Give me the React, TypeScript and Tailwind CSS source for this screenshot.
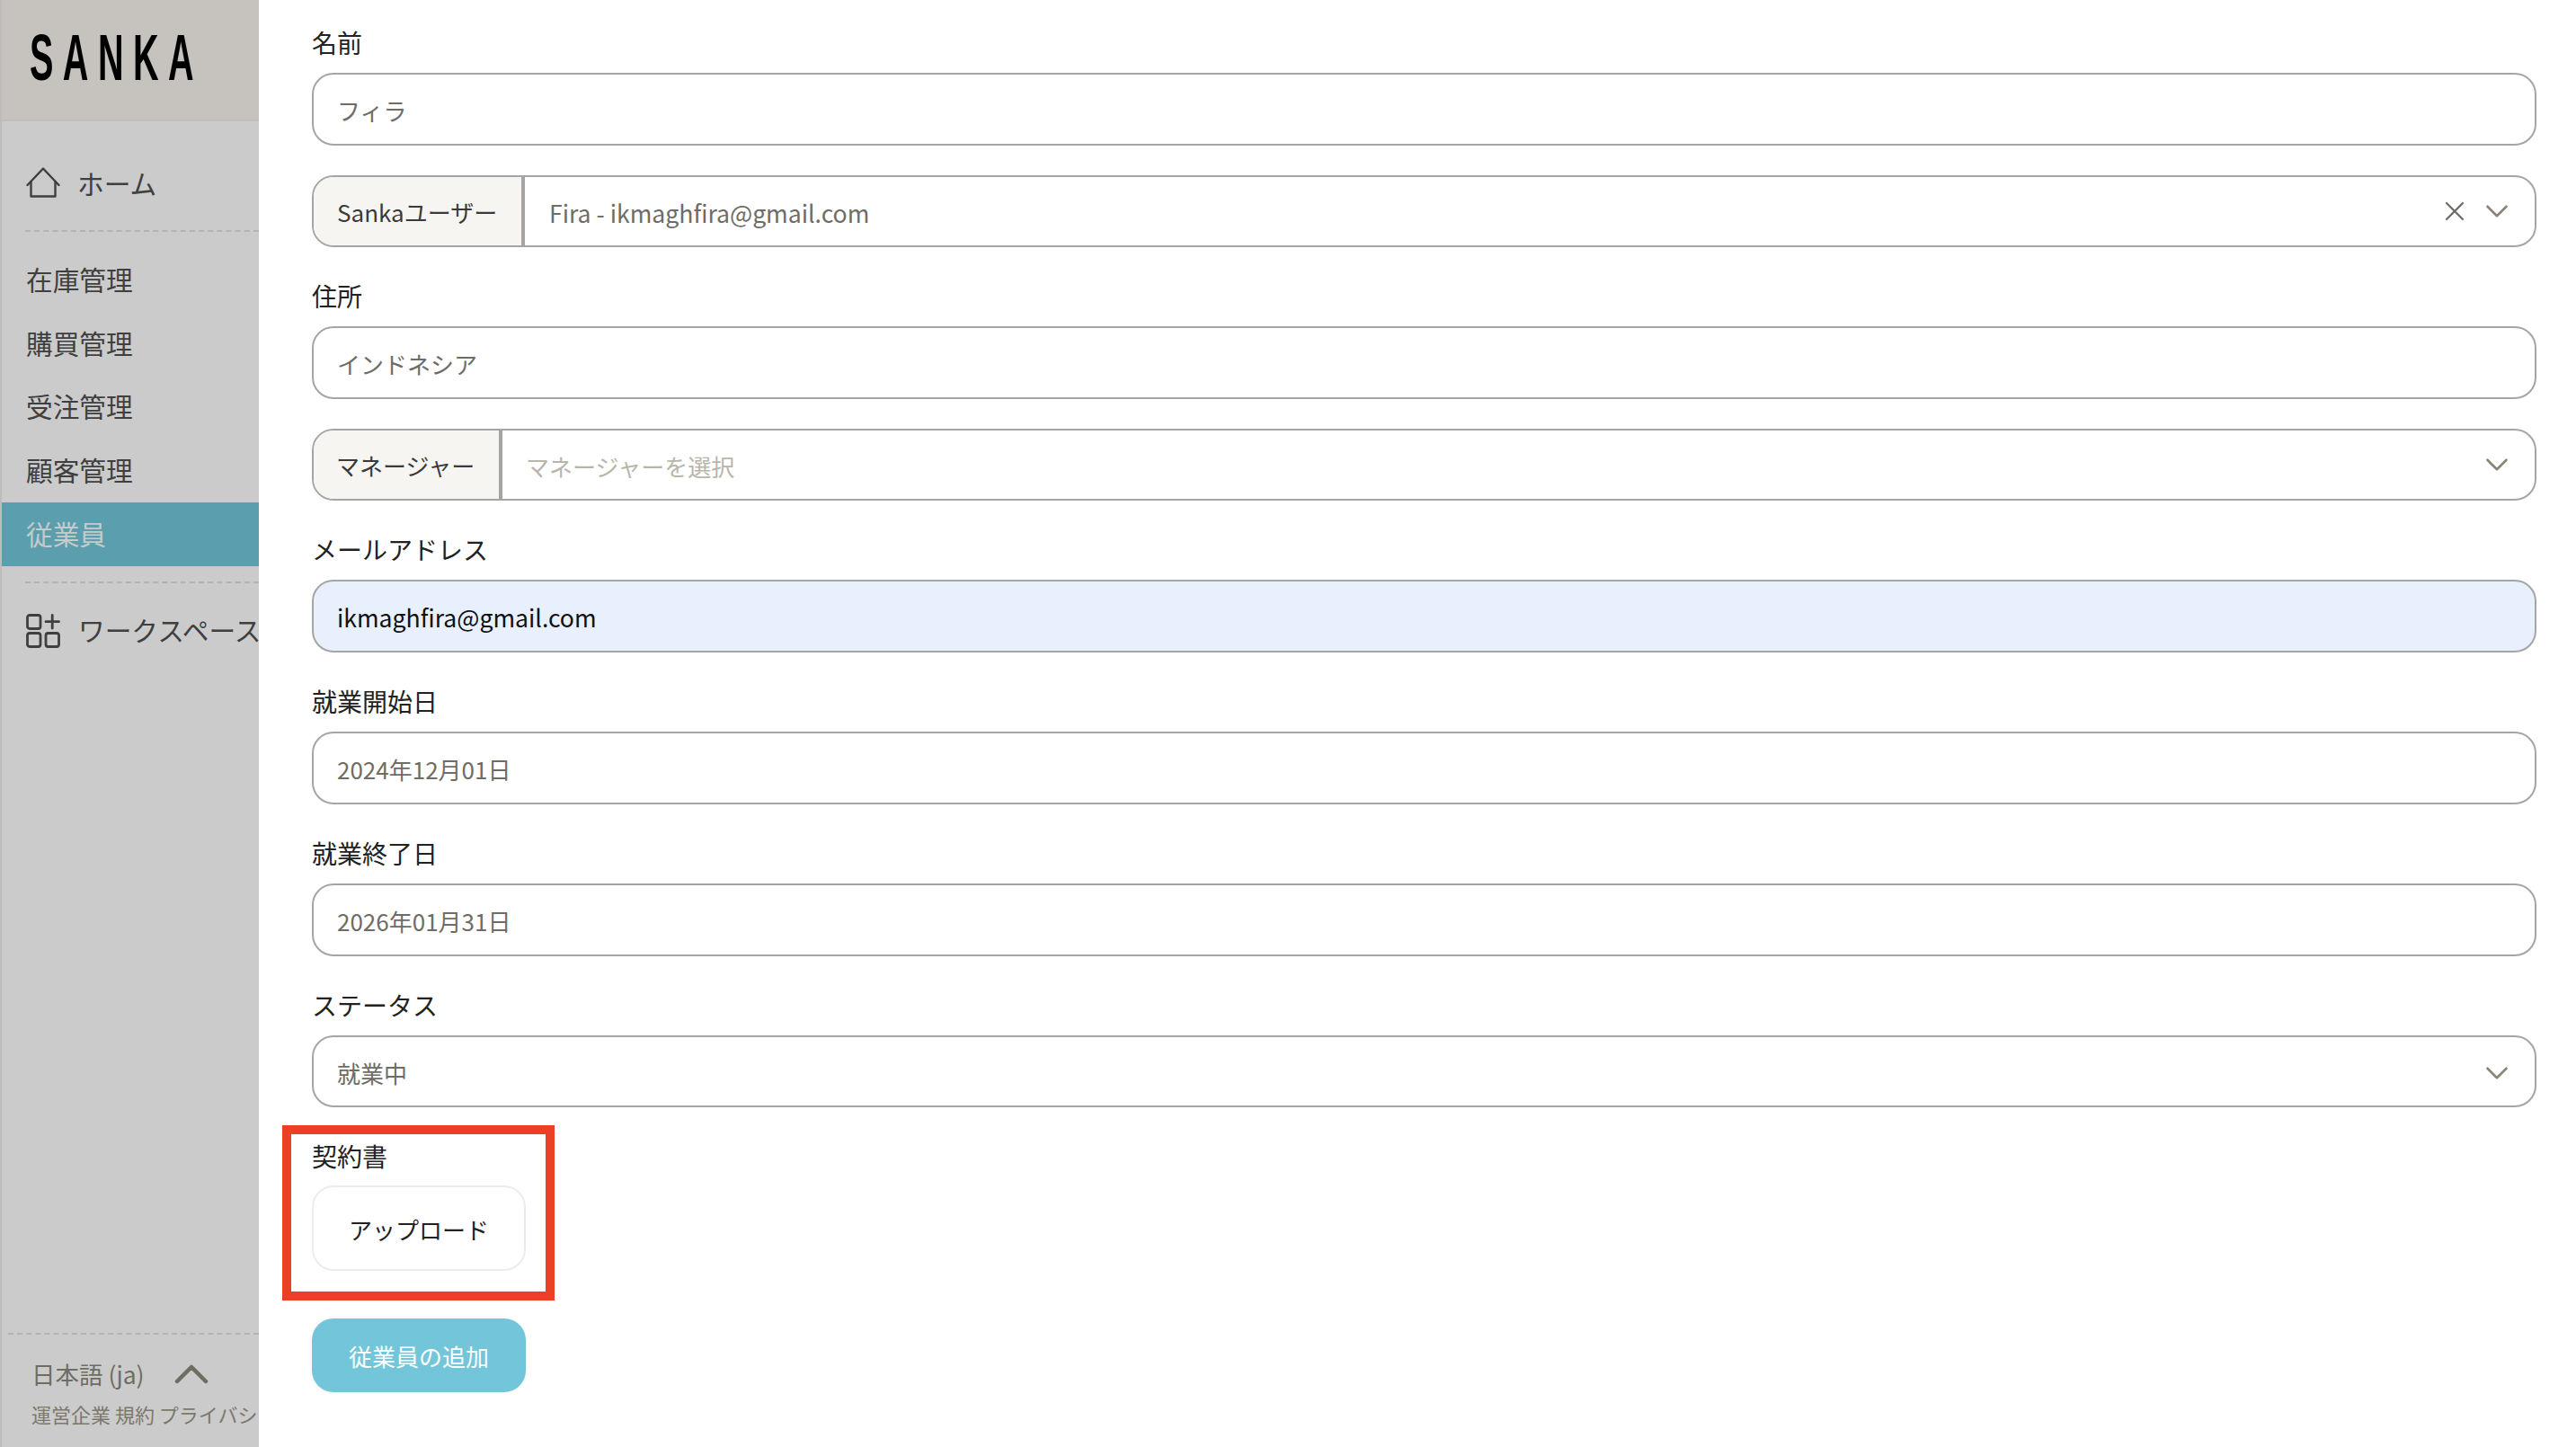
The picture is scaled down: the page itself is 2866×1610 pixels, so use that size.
import React from "react";
import { ChevronDown, X } from "lucide-react";

const font = { fontFamily: '"Noto Sans CJK JP", "Noto Sans", sans-serif' };

const HomeIcon = () => (
  <svg width="38" height="34" viewBox="0 0 38 34" fill="none" stroke="#3f3f3f" strokeWidth="2.4" strokeLinejoin="round" strokeLinecap="round" className="shrink-0 -mt-[2px]">
    <path d="M1.5 20 19 1.5 36.5 20" />
    <path d="M5.5 16V32.5H32.5V16" />
  </svg>
);

const WorkspaceIcon = () => (
  <svg width="38" height="38" viewBox="0 0 38 38" fill="none" stroke="#3f3f3f" strokeWidth="2.8" strokeLinecap="round" className="shrink-0">
    <rect x="1.5" y="1.5" width="14.5" height="15" rx="2.5" />
    <rect x="1.5" y="21.5" width="14.5" height="15" rx="2.5" />
    <rect x="22" y="21.5" width="14.5" height="15" rx="2.5" />
    <path d="M29.2 1.5V16M22 8.7H36.5" />
  </svg>
);

const NavItem = ({ label, active }: { label: string; active?: boolean }) => (
  <div className={`h-[70.5px] pl-[27px] flex items-center text-[29.7px] whitespace-nowrap ${active ? "bg-[#5b9fae] text-[#c3cbcb]" : "pb-px text-[#3f3f3f]"}`}>
    {label}
  </div>
);

const Label = ({ children }: { children: React.ReactNode }) => (
  <div className="h-[40px] mb-[14px] flex items-center text-[28px] text-[#222222]">{children}</div>
);

const TextBox = ({ value, filled }: { value: string; filled?: boolean }) => (
  <div className={`h-[81px] rounded-[24px] border-2 border-[#a5a5a5] flex items-center pl-[26px] pt-[2px] ${filled ? "text-[26.6px] bg-[#e8f0fe] text-[#111111]" : "text-[26px] bg-white text-[#6f6c66]"}`}>
    {value}
  </div>
);

const Chevron = () => <ChevronDown size={42} strokeWidth={1.5} className="text-[#8a8577] shrink-0" />;

const Page = () => (
  <div className="flex w-[2866px] h-[1610px] overflow-hidden bg-white" style={font}>
    <aside className="w-[288px] h-full shrink-0 flex flex-col bg-[#cbcbcb] border-l-2 border-[#bdbdbd] overflow-hidden">
      <div className="h-[135px] shrink-0 bg-[#c6c3be] border-b-2 border-[#bfbfbf] pl-[31px] pb-[6px] flex items-center">
        <span className="inline-block origin-left scale-x-[0.55] text-[72px] leading-none font-bold tracking-[19px] text-black whitespace-nowrap" style={{ fontFamily: '"Liberation Sans", sans-serif' }}>
          SANKA
        </span>
      </div>
      <div className="h-[123px] shrink-0 ml-[26px] pl-px pt-[17px] flex items-center gap-[19px] border-b-2 border-dashed border-[#b3b3b3] text-[29.7px] text-[#3f3f3f]">
        <HomeIcon />
        <span>ホーム</span>
      </div>
      <div className="pt-[19px]">
        <NavItem label="在庫管理" />
        <NavItem label="購買管理" />
        <NavItem label="受注管理" />
        <NavItem label="顧客管理" />
        <NavItem label="従業員" active />
      </div>
      <div className="ml-[26px] mt-[17px] border-t-2 border-dashed border-[#b3b3b3]" />
      <div className="h-[106px] shrink-0 pl-[27px] flex items-center gap-[20px] text-[29.7px] text-[#3f3f3f] whitespace-nowrap">
        <WorkspaceIcon />
        <span>ワークスペース</span>
      </div>
      <div className="mt-auto ml-[7px] border-t-2 border-dashed border-[#b3b3b3] h-[127px] shrink-0 pl-[26px] text-[#6f6c62]">
        <div className="mt-[24px] flex items-center gap-[33px] text-[26.5px] leading-[40px] whitespace-nowrap">
          <span>日本語 (ja)</span>
          <svg width="38" height="22" viewBox="0 0 38 22" fill="none" stroke="#6f6c62" strokeWidth="4.5" strokeLinecap="round" strokeLinejoin="round">
            <path d="M3 19 19 3 35 19" />
          </svg>
        </div>
        <div className="mt-[9px] text-[22px] leading-[30px] text-[#7b786e] whitespace-nowrap">運営企業 規約 プライバシーポリシー</div>
      </div>
    </aside>

    <main className="relative flex-1 pl-[59px] pr-[44px] pt-[27px]">
      <Label>名前</Label>
      <TextBox value="フィラ" />

      <div className="mt-[33px] h-[80px] rounded-[24px] border-2 border-[#a5a5a5] flex items-center overflow-hidden">
        <div className="h-full w-[235px] shrink-0 bg-[#f6f5f2] border-r-[4px] border-[#a5a5a5] pl-[26px] pt-px flex items-center text-[26px] text-[#3a3a3a]">Sankaユーザー</div>
        <div className="flex-1 pl-[27px] pt-[3px] text-[26.6px] text-[#6f6c66]">Fira - ikmaghfira@gmail.com</div>
        <X size={36} strokeWidth={1.5} className="text-[#6f6c66] shrink-0 mr-[-1px]" />
        <div className="mr-[21px] ml-[9px] flex"><Chevron /></div>
      </div>

      <div className="mt-[34px]"><Label>住所</Label></div>
      <TextBox value="インドネシア" />

      <div className="mt-[33px] h-[80px] rounded-[24px] border-2 border-[#a5a5a5] flex items-center overflow-hidden">
        <div className="h-full w-[210px] shrink-0 bg-[#f6f5f2] border-r-[4px] border-[#a5a5a5] pl-[25px] pt-px flex items-center text-[26px] text-[#3a3a3a]">マネージャー</div>
        <div className="flex-1 pl-[26px] pt-[3px] text-[26px] text-[#b8b5ab]">マネージャーを選択</div>
        <div className="mr-[21px] flex"><Chevron /></div>
      </div>

      <div className="mt-[34px]"><Label>メールアドレス</Label></div>
      <TextBox value="ikmaghfira@gmail.com" filled />

      <div className="mt-[34px]"><Label>就業開始日</Label></div>
      <div className="mt-px"><TextBox value="2024年12月01日" /></div>

      <div className="mt-[34px]"><Label>就業終了日</Label></div>
      <div className="mt-px"><TextBox value="2026年01月31日" /></div>

      <div className="mt-[34px]"><Label>ステータス</Label></div>
      <div className="h-[80px] rounded-[24px] border-2 border-[#a5a5a5] flex items-center pl-[26px] pr-[21px] pt-[3px] text-[26px] text-[#6f6c66]">
        <span className="flex-1">就業中</span>
        <Chevron />
      </div>

      <div className="mt-[34px]"><Label>契約書</Label></div>
      <div className="-mt-px w-[238px] h-[95px] rounded-[24px] border-2 border-[#ececec] flex items-center justify-center pt-px text-[26px] text-[#222222]">アップロード</div>

      <div className="mt-[53px] w-[238px] h-[82px] rounded-[24px] bg-[#73c6d9] flex items-center justify-center pt-px text-[26px] text-white">従業員の追加</div>

      {/* annotation box over the upload field */}
      <div className="absolute left-[26px] top-[1252px] w-[303px] h-[195px] border-[10px] border-[#eb4025] pointer-events-none" />
    </main>
  </div>
);

export default function App() {
  return <Page />;
}
